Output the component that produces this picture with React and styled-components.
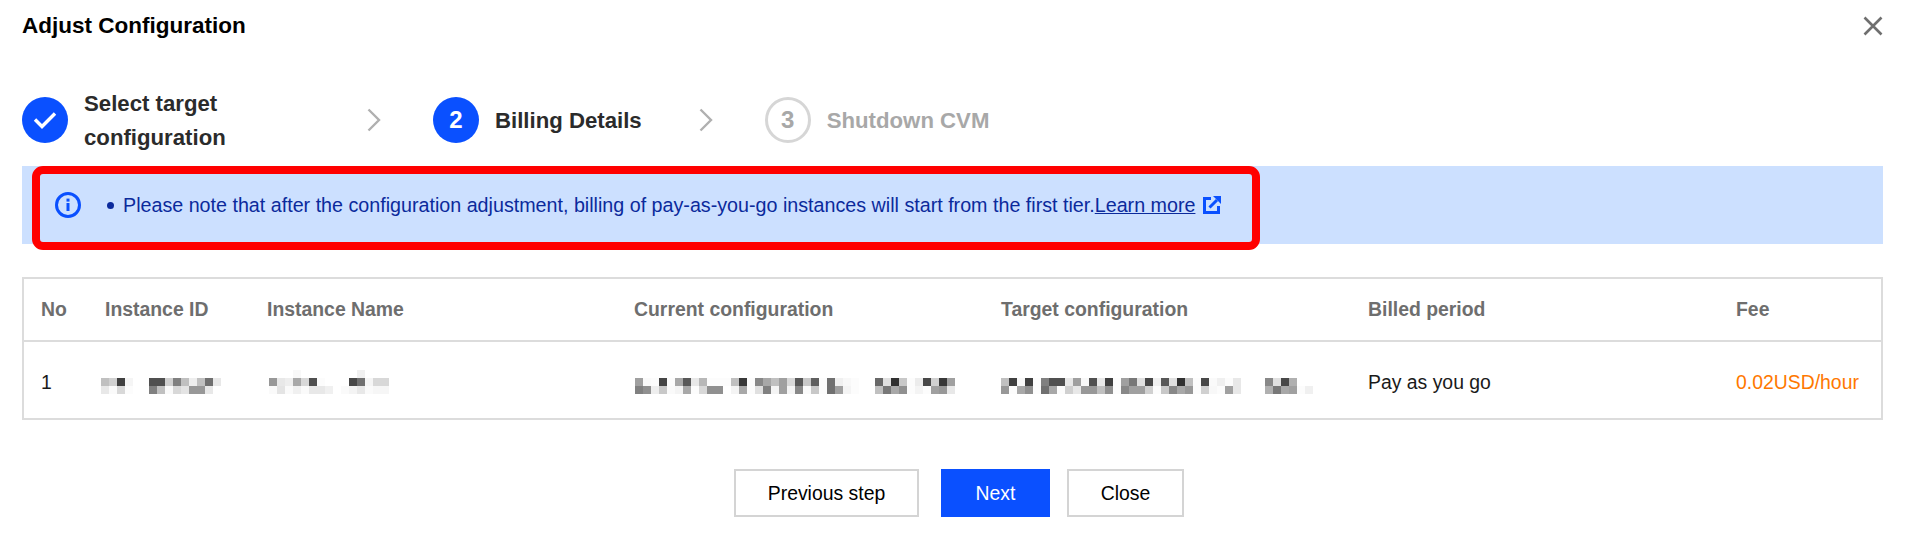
import React from "react";
import styled, { createGlobalStyle } from "styled-components";

const blue = "#0a50ff";

const GlobalStyle = createGlobalStyle`
  html, body {
    margin: 0;
    padding: 0;
    background: #fff;
    font-family: "Liberation Sans", Arial, sans-serif;
  }
`;

const Dialog = styled.div`
  width: 1916px;
  height: 534px;
  box-sizing: border-box;
  padding: 0 33px 0 22px;
  overflow: hidden;
`;

const TitleBar = styled.header`
  display: flex;
  align-items: center;
  justify-content: space-between;
  height: 52px;
  margin-bottom: 34px;
`;

const Title = styled.h2`
  margin: 0;
  font-size: 22.5px;
  font-weight: 700;
  color: #000;
`;

const CloseButton = styled.button`
  display: flex;
  padding: 0;
  border: 0;
  background: none;
  color: #6f6f6f;
`;

const Steps = styled.div`
  display: flex;
  align-items: center;
  height: 68px;
  margin-bottom: 12px;
`;

const Step = styled.div`
  display: flex;
  align-items: center;
  gap: 16px;
`;

const StepCircle = styled.div`
  display: flex;
  align-items: center;
  justify-content: center;
  width: 46px;
  height: 46px;
  box-sizing: border-box;
  border-radius: 50%;
  font-size: 24px;
  font-weight: 700;
  background: ${(p) => (p.$pending ? "#fff" : blue)};
  color: ${(p) => (p.$pending ? "#a8a8a8" : "#fff")};
  border: ${(p) => (p.$pending ? "3px solid #d6d6d6" : "0")};
`;

const StepLabel = styled.div`
  padding-top: 1px;
  font-size: 22.2px;
  font-weight: 700;
  line-height: 34px;
  color: ${(p) => (p.$pending ? "#a8a8a8" : "#2b2b2b")};
  width: ${(p) => p.$width || "auto"};
`;

const StepArrow = styled.svg`
  width: 14px;
  height: 24px;
  margin: 0 52px 0 57px;
  fill: none;
  stroke: #b0b0b0;
  stroke-width: 2.4;
`;

const Notice = styled.div`
  position: relative;
  display: flex;
  align-items: center;
  height: 78px;
  box-sizing: border-box;
  padding-left: 33px;
  margin-bottom: 33px;
  background: #cce0ff;
  color: #0b2a9c;
  font-size: 19.7px;
`;

const NoticeIcon = styled.svg`
  width: 26px;
  height: 26px;
  margin-right: 26px;
  flex: none;
`;

const Bullet = styled.span`
  width: 7px;
  height: 7px;
  margin-right: 9px;
  border-radius: 50%;
  background: #0b2a9c;
`;

const LearnMore = styled.a`
  color: inherit;
  text-decoration: underline;
`;

const ExternalIcon = styled.svg`
  width: 18px;
  height: 18px;
  margin-left: 8px;
`;

// the annotation drawn over the screenshot
const RedFrame = styled.div`
  position: absolute;
  left: 10px;
  top: 0;
  width: 1228px;
  height: 84px;
  box-sizing: border-box;
  border: 8px solid #ff0000;
  border-radius: 11px;
  pointer-events: none;
`;

const Table = styled.div`
  border: 2px solid #dcdcdc;
  font-size: 19.4px;
`;

const Row = styled.div`
  display: grid;
  grid-template-columns: 64px 162px 367px 367px 367px 368px 1fr;
  align-items: center;
  height: ${(p) => (p.$head ? "63px" : "76px")};
  box-sizing: border-box;
  padding-top: ${(p) => (p.$head ? "0" : "4px")};
  border-bottom: ${(p) => (p.$head ? "2px solid #dcdcdc" : "0")};
  color: ${(p) => (p.$head ? "#6e6e6e" : "#1a1a1a")};
  font-weight: ${(p) => (p.$head ? 700 : 400)};
`;

const Cell = styled.div`
  padding-left: 17px;
  white-space: nowrap;
  color: ${(p) => (p.$fee ? "#ff7800" : "inherit")};
`;

const MosaicSvg = styled.svg`
  display: block;
  margin-top: ${(p) => (3 - p.$rows) * 8}px;
  margin-left: ${(p) => p.$shift || 0}px;
  filter: blur(0.6px);
`;

const Actions = styled.div`
  display: flex;
  justify-content: center;
  gap: 17px;
  margin-top: 49px;
  padding-left: 13px;
`;

const ActionButton = styled.button`
  width: ${(p) => p.$width};
  height: 48px;
  margin-left: ${(p) => (p.$primary ? "5px" : "0")};
  box-sizing: border-box;
  border: ${(p) => (p.$primary ? "0" : "2px solid #d4d4d4")};
  background: ${(p) => (p.$primary ? blue : "#fff")};
  color: ${(p) => (p.$primary ? "#fff" : "#000")};
  font-family: inherit;
  font-size: 19.4px;
`;

// greys of the pixelated cells, two rows per value
const mosaics = {
  id: [
    "c0 d0 40 f5 ff ff 50 50 d0 80 c0 ee c0 70 e8",
    "e8 fa d8 fc ff ff 80 c0 fa d8 e4 98 98 e8 ff",
  ],
  name: [
    "ff ff ff f8 ff ff ff ff ff ff ff f0 ff ff ff",
    "98 e8 ee a8 d8 50 fc ff ff ff 48 70 f5 d8 d8",
    "fa e4 fa f0 fa e8 e8 f0 ff fa f4 e8 fa f6 f6",
  ],
  current: [
    "a0 fa fc 45 fc a8 58 e8 b8 fc fc fc c0 38 fc 88 a8 c0 a0 d8 58 c8 60 fc 70 f0 f8 fc ff ff 68 e0 30 c8 fc ec 48 d0 38 a0",
    "80 90 ee c8 fa f4 a8 fc d8 90 90 ff f4 a8 fc e0 80 f4 a0 f4 88 fa c8 fc 70 a0 f4 fc ff ff c0 78 a8 90 fc f4 fc a0 98 e8",
  ],
  target: [
    "c0 40 f8 40 fc 80 50 50 e8 a0 f8 50 e8 40 fc a0 78 e0 48 f0 58 e0 30 c0 fc 48 fa f0 fc e8 ff ff ff 88 e0 48 b0 ff ff",
    "98 fc a8 90 fc 70 a8 fc d0 e8 98 98 c0 90 fc 88 a0 a0 d0 fc c8 88 a8 98 fc d0 f8 fc a0 e8 ff ff ff b0 78 a8 a0 fc f0",
  ],
};

function Mosaic({ rows, shift }) {
  const cell = 8;
  const width = rows[0].split(" ").length * cell;
  return (
    <MosaicSvg width={width} height={rows.length * cell} $rows={rows.length} $shift={shift}>
      {rows.map((row, y) =>
        row.split(" ").map((grey, x) => (
          <rect
            key={x}
            x={x * cell}
            y={y * cell}
            width={cell}
            height={cell}
            fill={`#${grey}${grey}${grey}`}
          />
        ))
      )}
    </MosaicSvg>
  );
}

function Chevron() {
  return (
    <StepArrow viewBox="0 0 14 24">
      <path d="M1.5 1.5 L12 12 L1.5 22.5" />
    </StepArrow>
  );
}

export default function App() {
  return (
    <Dialog>
      <GlobalStyle />
      <TitleBar>
        <Title>Adjust Configuration</Title>
        <CloseButton aria-label="Close">
          <svg width="20" height="20" viewBox="0 0 20 20" fill="none" stroke="currentColor" strokeWidth="2.6">
            <path d="M1.5 1.5 L18.5 18.5 M18.5 1.5 L1.5 18.5" />
          </svg>
        </CloseButton>
      </TitleBar>

      <Steps>
        <Step>
          <StepCircle>
            <svg width="24" height="18" viewBox="0 0 24 18" fill="none" stroke="#fff" strokeWidth="3.4">
              <path d="M2 8.5 L9 15.5 L22 2.5" />
            </svg>
          </StepCircle>
          <StepLabel $width="226px">Select target configuration</StepLabel>
        </Step>
        <Chevron />
        <Step>
          <StepCircle>2</StepCircle>
          <StepLabel>Billing Details</StepLabel>
        </Step>
        <Chevron />
        <Step>
          <StepCircle $pending>3</StepCircle>
          <StepLabel $pending>Shutdown CVM</StepLabel>
        </Step>
      </Steps>

      <Notice>
        <NoticeIcon viewBox="0 0 26 26" fill="none">
          <circle cx="13" cy="13" r="11.5" stroke={blue} strokeWidth="3" />
          <rect x="11.5" y="11" width="3" height="8" fill={blue} />
          <rect x="11.5" y="6.6" width="3" height="3" fill={blue} />
        </NoticeIcon>
        <Bullet />
        <span>
          Please note that after the configuration adjustment, billing of pay-as-you-go instances will start from the first tier.
          <LearnMore href="#">Learn more</LearnMore>
        </span>
        <ExternalIcon viewBox="0 0 18 18" fill="none">
          <path d="M8 2.5 H1.5 V16.5 H15.5 V10" stroke={blue} strokeWidth="3" />
          <path d="M6.5 11.5 L14 4" stroke={blue} strokeWidth="3" />
          <path d="M10 0 H18 V8 Z" fill={blue} />
        </ExternalIcon>
        <RedFrame />
      </Notice>

      <Table>
        <Row $head>
          <Cell>No</Cell>
          <Cell>Instance ID</Cell>
          <Cell>Instance Name</Cell>
          <Cell>Current configuration</Cell>
          <Cell>Target configuration</Cell>
          <Cell>Billed period</Cell>
          <Cell>Fee</Cell>
        </Row>
        <Row>
          <Cell>1</Cell>
          <Cell><Mosaic rows={mosaics.id} shift={-4} /></Cell>
          <Cell><Mosaic rows={mosaics.name} shift={2} /></Cell>
          <Cell><Mosaic rows={mosaics.current} shift={1} /></Cell>
          <Cell><Mosaic rows={mosaics.target} /></Cell>
          <Cell>Pay as you go</Cell>
          <Cell $fee>0.02USD/hour</Cell>
        </Row>
      </Table>

      <Actions>
        <ActionButton $width="185px">Previous step</ActionButton>
        <ActionButton $width="109px" $primary>Next</ActionButton>
        <ActionButton $width="117px">Close</ActionButton>
      </Actions>
    </Dialog>
  );
}
